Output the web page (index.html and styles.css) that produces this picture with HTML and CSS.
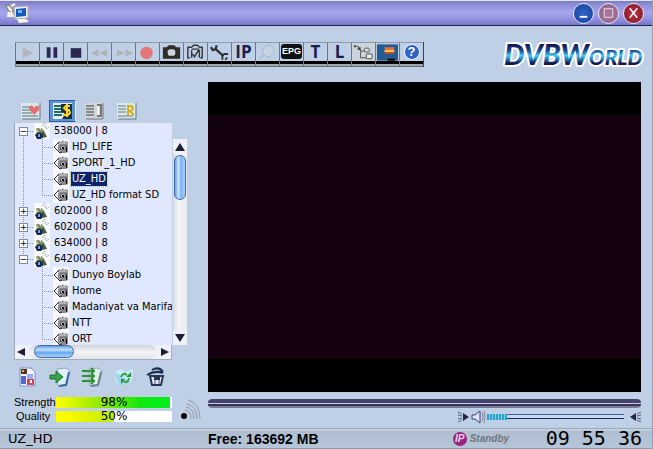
FILE: index.html
```html
<!DOCTYPE html>
<html lang="en">
<head>
<meta charset="utf-8">
<title>DVBWorld</title>
<link rel="stylesheet" href="styles.css">
</head>
<body>
<svg class="defs" aria-hidden="true">
  <defs>
    <symbol id="dish" viewBox="0 0 16 16">
      <path d="M0 0h16v16H0z" fill="#f8faff"/>
      <path d="M2 5l3 0 5 5-2 2-4-2z" fill="#7d8c62"/>
      <path d="M2 5l6 8-2 1-4-4z" fill="#c9cf9a"/>
      <path d="M7 5l3 3 3 6-5 1z" fill="#47614b"/>
      <path d="M7 5l2 1 0 3-2-1z" fill="#8ba86a"/>
      <path d="M1 12l3-3 3 1 2 3-2 3H3z" fill="#16234f"/>
      <path d="M4 11h2v3H4z" fill="#6fa8d4"/>
      <path d="M8 3l2-1M11 5l1-3M12 6l3-2M9 1l3-1" stroke="#b4b4bc" fill="none"/>
    </symbol>
    <symbol id="channel" viewBox="0 0 16 16">
      <path d="M0 0h16v16H0z" fill="#f8faff"/>
      <path d="M5 4l2-2 1 1 2-2 1 2 2-1 2 1v10l-2 1H8L4 10z" fill="#8e8e90"/>
      <path d="M5 6l2-2h7" stroke="#cfcfd2" fill="none"/>
      <path d="M7 6h7v5H7z" fill="#6a6a6e"/>
      <path d="M8 7h4v3H8z" fill="#a9a9ad"/>
      <path d="M9 8h2v2H9zM13 8h1v5h-1z" fill="#111"/>
      <path d="M1 8l4-4v8z" fill="#fff"/>
      <path d="M6 3L1 8l6 6 2-1" stroke="#26262c" fill="none"/>
    </symbol>
    <linearGradient id="chrome" x1="0" y1="0" x2="0" y2="1">
      <stop offset=".25" stop-color="#141650"/>
      <stop offset=".42" stop-color="#1c4c94"/>
      <stop offset=".56" stop-color="#49c9f2"/>
      <stop offset=".64" stop-color="#2a8cc8"/>
      <stop offset=".78" stop-color="#15174c"/>
    </linearGradient>
  </defs>
</svg>

<div class="titlebar">
  <svg class="app-icon" width="24" height="22" viewBox="0 0 24 22" aria-hidden="true">
    <path d="M1 3l4 1 3 4-1 3-4-3z" fill="#f4f2e4" stroke="#7d7868"/>
    <path d="M6 4l4-2M4 10l-1 4h5l-2-4" fill="#eee" stroke="#f6f3dc" stroke-width="2"/>
    <path d="M9 5l14-1v12l-13 1z" fill="#f1f1ec" stroke="#aaa9b5"/>
    <path d="M11 7l10-1v8l-10 1z" fill="#1659bd"/>
    <path d="M13 8h4v3h-4z" fill="#73b6ef"/>
    <path d="M12 17h9l3 3-10 1z" fill="#f7f5df"/>
  </svg>
  <div class="window-buttons">
    <button class="win win-min" aria-label="Minimize"><svg width="20" height="20" viewBox="0 0 20 20"><path d="M6 14h8" stroke="#fff" stroke-width="2"/></svg></button>
    <button class="win win-max" aria-label="Maximize"><svg width="20" height="20" viewBox="0 0 20 20"><path d="M5.500 5.500h9v9h-9z" stroke="#f2dbe6" fill="none"/></svg></button>
    <button class="win win-close" aria-label="Close"><svg width="20" height="20" viewBox="0 0 20 20"><path d="M6 5l8 10M14 5L6 15" stroke="#fff" stroke-width="1.500"/></svg></button>
  </div>
</div>

<header class="header">
  <div class="toolbar" role="toolbar" aria-label="Playback">
    <button aria-label="Play"><svg viewBox="0 0 24 18"><path d="M7 4v11l11-5z" fill="#b4b6ba"/></svg></button>
    <button aria-label="Pause"><svg viewBox="0 0 24 18"><path d="M7 4h4v11H7zM14 4h4v11h-4z" fill="#282a55"/></svg></button>
    <button aria-label="Stop"><svg viewBox="0 0 24 18"><path d="M7 5h11v10H7z" fill="#2b2650"/></svg></button>
    <button aria-label="Rewind"><svg viewBox="0 0 24 18"><path d="M11 6v8l-8-4zM20 6v8l-8-4z" fill="#b0b4ba"/></svg></button>
    <button aria-label="Forward"><svg viewBox="0 0 24 18"><path d="M5 6v8l8-4zM14 6v8l8-4z" fill="#b0b4ba"/></svg></button>
    <button aria-label="Record"><svg viewBox="0 0 24 18"><circle cx="11" cy="10" r="6.500" fill="#e27678"/></svg></button>
    <button aria-label="Snapshot"><svg viewBox="0 0 24 18"><path d="M3 4h4l2-2h6l2 2h4v12H3z" fill="#302d27"/><rect x="8" y="6" width="8" height="7" rx="3" fill="#cdd6df"/></svg></button>
    <button aria-label="Schedule"><svg viewBox="0 0 24 18"><path d="M6 15H4V4h4m8 0h3v11h-2M8 4l2-2h4l2 2M8 6h8M8 7v8M16 7v8M9 11l2 3 4-7" fill="none" stroke="#34383b" stroke-width="1.500"/></svg></button>
    <button aria-label="Settings"><svg viewBox="0 0 24 18"><path d="M3 4l2 3 3-1 1-4M8 6l8 7" fill="none" stroke="#30343a" stroke-width="2.500"/><path d="M15 17v-4l2-2h4M20 15l-2 2" fill="none" stroke="#30343a" stroke-width="2"/></svg></button>
    <button class="letter">IP</button>
    <button aria-label="Search"><svg viewBox="0 0 24 18"><circle cx="13" cy="8" r="6" fill="#c3d4e6" stroke="#a8b7c3"/><path d="M8 12l-4 4" stroke="#b5bdc3" stroke-width="2"/></svg></button>
    <button class="epg"><span>EPG</span></button>
    <button class="letter">T</button>
    <button class="letter">L</button>
    <button class="pressed" aria-label="Channel tree"><svg viewBox="0 0 24 18"><path d="M2 2h2v2H2zM6 4h3v3H6z" fill="#444"/><path d="M4 3h3M9 6v9h6M9 8h5" stroke="#555" fill="none"/><rect x="13" y="5" width="5" height="4" rx="1" fill="#ddd" stroke="#555"/><rect x="15" y="11" width="6" height="5" rx="1" fill="#eee" stroke="#444"/></svg></button>
    <button aria-label="Display"><svg viewBox="0 0 24 18"><path d="M1 1h22v17H1z" fill="#235c91"/><path d="M9 4h10v3H9z" fill="#ed6942"/><path d="M9 7h10v2H9z" fill="#ffd13a"/><path d="M9 9h10v2H9z" fill="#c94a31"/><path d="M12 16h8v2h-8z" fill="#000"/></svg></button>
    <button aria-label="Help" class="help"><span>?</span></button>
  </div>
  <svg class="logo" width="146" height="36" viewBox="0 0 146 36" role="img" aria-label="DVBWorld">
    <text class="logo-text" x="3" y="25"><tspan class="logo-big">DVBW</tspan><tspan class="logo-small">ORLD</tspan></text>
  </svg>
</header>

<main class="main">
  <aside class="sidebar">
    <div class="tabs">
      <button aria-label="Favorites"><svg width="20" height="18" viewBox="0 0 20 18"><path d="M0 1h19v16H0z" fill="#dce7e8"/><path d="M1 5h9M1 8h9M1 11h10M1 14h16" stroke="#4d7683"/><path d="M1 17h18V1" fill="none" stroke="#66727b"/><path d="M13 13L8 7c-1-4 4-5 5-1 2-4 7-2 5 2z" fill="#e66f77"/></svg></button>
      <button class="active" aria-label="Satellites"><svg width="20" height="18" viewBox="0 0 20 18"><path d="M0 1h19v16H0z" fill="#e6f0df"/><path d="M1 4h8M1 7h8M1 10h9M1 13h8" stroke="#216a74" stroke-width="2"/><path d="M8 2h11v15H9l3-5-4-3z" fill="#17303a"/><path d="M17 4h-4l-2 2 2 2h3l1 3-2 2h-5M14 2v13" fill="none" stroke="#ffd426" stroke-width="2"/></svg></button>
      <button aria-label="Information"><svg width="20" height="18" viewBox="0 0 20 18"><path d="M0 1h18v16H0z" fill="#d3d6d7"/><path d="M1 4h8M1 7h8M1 10h8M1 13h8" stroke="#858a8c" stroke-width="2"/><path d="M1 17h17V1" fill="none" stroke="#70777c"/><path d="M12 3h4v11h-4" fill="none" stroke="#777" stroke-width="2"/><path d="M13 4v9" stroke="#f5f5f5" stroke-width="2"/></svg></button>
      <button aria-label="Radio"><svg width="20" height="18" viewBox="0 0 20 18"><path d="M0 1h19v16H0z" fill="#dce7e8"/><path d="M1 4h8M1 7h8M1 10h8M1 14h15" stroke="#5c7e87"/><path d="M1 17h18V1" fill="none" stroke="#66727b"/><path d="M11 13V4h3q4 2 0 5h-3m2 0l4 4" fill="none" stroke="#d6ad13" stroke-width="2"/></svg></button>
    </div>

    <div class="browser">
      <ul class="tree">
        <li class="group first"><div class="row"><button class="box" aria-label="Collapse">−</button><i class="dots"></i><svg class="ico"><use href="#dish"/></svg><span>538000 | 8</span></div>
          <ul class="channels">
            <li class="row"><i class="dots"></i><svg class="ico"><use href="#channel"/></svg><span>HD_LIFE</span></li>
            <li class="row"><i class="dots"></i><svg class="ico"><use href="#channel"/></svg><span>SPORT_1_HD</span></li>
            <li class="row"><i class="dots"></i><svg class="ico"><use href="#channel"/></svg><span class="selected">UZ_HD</span></li>
            <li class="row"><i class="dots"></i><svg class="ico"><use href="#channel"/></svg><span>UZ_HD format SD</span></li>
          </ul>
        </li>
        <li class="group"><div class="row"><button class="box" aria-label="Expand">+</button><i class="dots"></i><svg class="ico"><use href="#dish"/></svg><span>602000 | 8</span></div></li>
        <li class="group"><div class="row"><button class="box" aria-label="Expand">+</button><i class="dots"></i><svg class="ico"><use href="#dish"/></svg><span>602000 | 8</span></div></li>
        <li class="group"><div class="row"><button class="box" aria-label="Expand">+</button><i class="dots"></i><svg class="ico"><use href="#dish"/></svg><span>634000 | 8</span></div></li>
        <li class="group last"><div class="row"><button class="box" aria-label="Collapse">−</button><i class="dots"></i><svg class="ico"><use href="#dish"/></svg><span>642000 | 8</span></div>
          <ul class="channels">
            <li class="row"><i class="dots"></i><svg class="ico"><use href="#channel"/></svg><span>Dunyo Boylab</span></li>
            <li class="row"><i class="dots"></i><svg class="ico"><use href="#channel"/></svg><span>Home</span></li>
            <li class="row"><i class="dots"></i><svg class="ico"><use href="#channel"/></svg><span>Madaniyat va Marifa</span></li>
            <li class="row"><i class="dots"></i><svg class="ico"><use href="#channel"/></svg><span>NTT</span></li>
            <li class="row"><i class="dots"></i><svg class="ico"><use href="#channel"/></svg><span>ORT</span></li>
          </ul>
        </li>
      </ul>
      <div class="vscroll">
        <button aria-label="Scroll up"><svg width="14" height="14" viewBox="0 0 14 14"><path d="M7 3l5 8H2z" fill="#1e1e33"/></svg></button>
        <div class="vtrack"><div class="vthumb"></div></div>
        <button aria-label="Scroll down"><svg width="14" height="14" viewBox="0 0 14 14"><path d="M7 11l5-8H2z" fill="#1e1e33"/></svg></button>
      </div>
      <div class="hscroll">
        <button aria-label="Scroll left"><svg width="14" height="14" viewBox="0 0 14 14"><path d="M2 7l8-4v8z" fill="#1e1e33"/></svg></button>
        <div class="htrack"><div class="hthumb"></div></div>
        <button aria-label="Scroll right"><svg width="14" height="14" viewBox="0 0 14 14"><path d="M12 7L4 3v8z" fill="#1e1e33"/></svg></button>
      </div>
    </div>

    <div class="actions">
      <button aria-label="Channel report"><svg width="22" height="20" viewBox="0 0 22 20"><path d="M3 1h11l4 4v14H3z" fill="#f5f5ff" stroke="#7b8ed0"/><path d="M4 2h6v5H4z" fill="#5a3422"/><path d="M5 3h2v2H5z" fill="#e5b33c"/><path d="M4 9h5v8H4z" fill="#5368d2"/><path d="M10 7h6v5h-6z" fill="#9aaef0"/><path d="M10 12h7v6h-7z" fill="#db4154"/><path d="M13 13h2v3h-2z" fill="#fff"/></svg></button>
      <button aria-label="Import"><svg width="22" height="20" viewBox="0 0 22 20"><path d="M8 2l9-1 4 3-3 13-9 2z" fill="#dff0fa" stroke="#89a9bd"/><path d="M20 5l-3 13-7 1" fill="none" stroke="#3c6ba0" stroke-width="2"/><path d="M1 8h6V4l7 6-7 6v-4H1z" fill="#36a544" stroke="#237030"/></svg></button>
      <button aria-label="Import all"><svg width="22" height="20" viewBox="0 0 22 20"><path d="M8 2l9-1 4 3-3 13-9 2z" fill="#dff0e4" stroke="#89a9bd"/><path d="M20 5l-3 13-7 1" fill="none" stroke="#6a8590" stroke-width="2"/><path d="M1 4h11M1 9h11M1 14h11M10 1l3 3-3 3M10 6l3 3-3 3M10 11l3 3-3 3" fill="none" stroke="#2f9239" stroke-width="2"/></svg></button>
      <button aria-label="Refresh"><svg width="22" height="20" viewBox="0 0 22 20"><path d="M1 5l7-3 4 3 8-3-2 14-12 3-3-4z" fill="#c9edf7"/><path d="M1 5l9 5 8 6-12 3z" fill="#a0d4e9"/><path d="M8 10q2-5 6-2M16 11q-1 6-6 3" fill="none" stroke="#36a046" stroke-width="2"/><path d="M13 10h5V5zM12 12H8v5z" fill="#2b8e3c"/></svg></button>
      <button aria-label="Delete"><svg width="22" height="20" viewBox="0 0 22 20"><path d="M5 9h13l-2 9H7z" fill="#e4eaf2" stroke="#263454" stroke-width="2"/><path d="M2 8q8-5 16-2M7 3q7-4 11 2" fill="none" stroke="#1e2b4b" stroke-width="2"/><path d="M10 10v7M14 10v7" stroke="#43557c"/><path d="M9 10h6v3H9z" fill="#263454"/></svg></button>
    </div>

    <div class="signal">
      <div class="meters">
        <span id="str">Strength</span><div class="meter" role="meter" aria-labelledby="str" aria-valuenow="98"><div class="fill strong" style="width:98%"></div><span class="value">98%</span></div>
        <span id="qua" class="quality">Quality</span><div class="meter" role="meter" aria-labelledby="qua" aria-valuenow="50"><div class="fill" style="width:50%"></div><span class="value">50%</span></div>
      </div>
      <svg width="22" height="24" viewBox="0 0 22 24" aria-hidden="true"><circle cx="4" cy="18" r="3" fill="#080808"/><g fill="none" stroke="#939ba5"><path d="M5 12q6 1 6 9"/><path d="M6 9q8 1 8 12"/><path d="M7 6q10 2 10 15"/><path d="M8 2q12 3 12 19"/></g></svg>
    </div>
  </aside>

  <section class="player">
    <div class="video"><div class="frame"></div></div>
    <input class="seek" type="range" min="0" max="100" value="0" aria-label="Position">
    <div class="volume">
      <button aria-label="Volume down"><svg width="12" height="12" viewBox="0 0 12 12"><path d="M5 2l6 4-6 4z" fill="#24243c"/><path d="M0 1l4 2M0 4l4 1M0 8l4-1M0 11l4-2" stroke="#555b70"/></svg></button>
      <button aria-label="Mute"><svg width="15" height="14" viewBox="0 0 15 14"><path d="M1 5h3l5-4v12L4 9H1z" fill="#dde6f6" stroke="#3a3a80"/><path d="M11 3q2 4 0 8M13 1q2 6 0 12" fill="none" stroke="#83868e"/></svg></button>
      <input class="level" type="range" min="0" max="100" value="15" aria-label="Volume">
      <button aria-label="Volume up"><svg width="12" height="12" viewBox="0 0 12 12"><path d="M7 2L1 6l6 4z" fill="#24243c"/><path d="M12 1L8 3M12 4L8 5M12 8L8 7M12 11L8 9" stroke="#555b70"/></svg></button>
    </div>
  </section>
</main>

<footer class="status">
  <span class="channel-name">UZ_HD</span>
  <span class="free">Free: 163692 MB</span>
  <span class="standby"><span class="ip">IP</span>Standby</span>
  <time class="clock">09 55 36</time>
</footer>
</body>
</html>
```

FILE: styles.css
```css
* { box-sizing: border-box; }

body {
  margin: 0;
  min-height: 100vh;
  display: flex;
  flex-direction: column;
  background: #bfd0e6;
  border-right: 1px solid #8f9fb8;
  color: #000;
  font-family: "Liberation Sans", sans-serif;
  font-size: 11px;
}

button {
  margin: 0;
  padding: 0;
  border: 0;
  background: none;
  color: inherit;
  font: inherit;
  display: flex;
  align-items: center;
  justify-content: center;
}

ul { list-style: none; margin: 0; padding: 0; }
svg { display: block; }
.defs { position: absolute; width: 0; height: 0; }

/* Title bar */
.titlebar {
  height: 26px;
  display: flex;
  justify-content: space-between;
  align-items: center;
  padding: 0 8px 0 5px;
  border-top: 1px solid #dfe5f7;
  border-bottom: 1px solid #20244f;
  background: linear-gradient(#7c7cc2, #9393dc 20%, #a6a6ec 50%, #8c8cda 80%, #7676c4);
}
.window-buttons { display: flex; gap: 4px; }
.win {
  width: 21px;
  height: 21px;
  border: 1px solid #e9e6f6;
  border-radius: 50%;
}
.win-min { background: radial-gradient(#2f64c8, #173f9c); }
.win-max { background: radial-gradient(#a9799b, #8d6088); }
.win-close { background: radial-gradient(#c03442, #7c1227); }

/* Toolbar and logo */
.header {
  height: 56px;
  display: flex;
  justify-content: space-between;
  align-items: flex-start;
  padding: 14px 5px 0 15px;
}
.toolbar {
  display: flex;
  height: 25px;
  margin-top: 2px;
  border-right: 1px solid #39414c;
}
.toolbar button {
  width: 24px;
  height: 25px;
  align-items: flex-start;
  border-top: 1px solid #8e9bab;
  border-left: 1px solid #6c7787;
  border-bottom: 1px solid #5f6877;
  background: linear-gradient(#bfd0e6 18px, #000 18px, #000 21px, #a3a9ae 21px);
}
.toolbar svg { width: 23px; height: 18px; }
.toolbar .letter {
  font: bold 17px/18px "Open Sans", sans-serif;
  color: #17204c;
}
.toolbar .pressed { background: linear-gradient(#ccd5de 18px, #000 18px, #000 21px, #a3a9ae 21px); }
.epg span {
  width: 21px;
  height: 15px;
  margin-top: 1px;
  border-radius: 3px;
  background: #111;
  color: #fff;
  font: bold 9px/15px "Liberation Sans", sans-serif;
}
.help span {
  width: 16px;
  height: 16px;
  margin-top: 1px;
  border: 1px solid #f4f7ff;
  border-radius: 50%;
  background: #2e62c9;
  color: #fff;
  font: bold 13px/14px "Liberation Sans", sans-serif;
}
.logo { overflow: visible; }
.logo-text {
  font-family: Lato, sans-serif;
  font-weight: 900;
  font-style: italic;
  fill: url(#chrome);
  stroke: #fff;
  stroke-width: 4px;
  stroke-linejoin: round;
  paint-order: stroke;
}
.logo-big { font-size: 29px; }
.logo-small { font-size: 21px; }

/* Main area */
.main {
  flex: 1;
  display: grid;
  grid-template-columns: 186px 1fr;
  gap: 8px;
  padding: 0 11px 5px 14px;
}
.sidebar { display: flex; flex-direction: column; padding-top: 18px; }
.tabs { display: flex; gap: 5px; padding-left: 3px; }
.tabs button {
  width: 27px;
  height: 22px;
}
.tabs .active {
  background: #5e92dc;
  border: 1px solid #315b9c;
  border-right-color: #e9f2ff;
}

.browser {
  display: grid;
  grid-template-columns: 158px 15px;
  grid-template-rows: 1fr 15px;
}
.tree {
  height: 223px;
  overflow: hidden;
  background: #dfe8ff;
  border-left: 1px solid #9aa5b8;
  border-top: 1px solid #c4cede;
  font: 11px/16px "DejaVu Sans Condensed", "Open Sans", sans-serif;
  white-space: nowrap;
  padding-left: 4px;
}
.row { display: flex; align-items: center; height: 16px; }
.row span { padding: 0 1px; margin-left: 3px; line-height: 14px; }
.group { background: repeating-linear-gradient(#8992a5 0 1px, transparent 1px 2px) 4px 0 / 1px 100% no-repeat; }
.group.first { background-position: 4px 8px; }
.group.last { background-size: 1px 8px; }
.ico { width: 16px; height: 16px; flex: none; }
.box {
  width: 9px;
  height: 9px;
  border: 1px solid #7f8ea8;
  background: #fff;
  font: 9px/7px "DejaVu Sans", sans-serif;
}
.dots {
  flex: none;
  width: 6px;
  height: 1px;
  background: repeating-linear-gradient(90deg, #8992a5 0 1px, transparent 1px 2px);
}
.channels {
  margin-left: 23px;
  background: repeating-linear-gradient(#8992a5 0 1px, transparent 1px 2px) 0 0 / 1px calc(100% - 8px) no-repeat;
}
.channels .dots { width: 11px; }
.channels span { margin-left: 2px; }
.row .selected { background: #0c246a; color: #fff; outline: 1px dotted #c9c27a; }

.vscroll {
  display: flex;
  flex-direction: column;
  padding-top: 17px;
  padding-left: 1px;
}
.vscroll button, .hscroll button { width: 14px; height: 15px; background: #eef1f7; }
.vtrack { flex: 1; background: linear-gradient(90deg, #d5d9e1, #f3f4f6 40%, #e8eaef); }
.vthumb {
  height: 45px;
  margin: 1px;
  border: 1px solid #3e6aa9;
  border-radius: 6px;
  background: linear-gradient(90deg, #6d9fdc, #cae4ff 35%, #78b3f2 60%, #a7d5ff);
}
.hscroll { display: flex; border: solid #a4acba; border-width: 0 1px 1px; background: #eef1f7; }
.hscroll button { height: 14px; }
.htrack { flex: 1; border-radius: 7px; background: linear-gradient(#cfd3dc, #f3f4f6 50%, #e2e5ea); }
.hthumb {
  width: 40px;
  height: 13px;
  margin-left: 5px;
  border: 1px solid #3e6aa9;
  border-radius: 7px;
  background: linear-gradient(#6d9fdc, #c3e0ff 35%, #69a8ee 60%, #a7d5ff);
}

.actions { display: flex; gap: 10px; padding: 7px 0 0 3px; }
.actions button { width: 22px; height: 20px; }
.signal { display: flex; align-items: flex-end; gap: 8px; margin-top: auto; margin-right: -2px; padding-bottom: 1px; }
.meters {
  flex: 1;
  display: grid;
  grid-template-columns: 42px 1fr;
  row-gap: 3px;
  align-items: center;
  line-height: 11px;
}
.quality { padding-left: 2px; }
.meter { display: grid; height: 11px; background: #fff; }
.meter > * { grid-area: 1 / 1; }
.value { text-align: center; font: 12px/11px "DejaVu Sans", sans-serif; }
.fill { background: linear-gradient(90deg, #ffff00, #f4f800 30%, #b8ee00); }
.strong { background: linear-gradient(90deg, #ffff00, #8ce800 40%, #10e810 75%, #00f020); }

/* Player */
.player { display: flex; flex-direction: column; min-width: 0; }
.video { flex: 1; display: flex; padding: 33px 0; background: #000; }
.frame { flex: 1; background: #130110; }

input { -webkit-appearance: none; appearance: none; margin: 0; min-width: 0; }
input::-webkit-slider-thumb { -webkit-appearance: none; width: 1px; height: 1px; background: transparent; }
.seek {
  height: 9px;
  margin: 7px 0 3px;
  border-radius: 4px;
  background: linear-gradient(#45456b 4px, #c7cde2 4px, #c7cde2 5px, #34345d 5px, #34345d 7px, #777b98 7px);
}
.volume { display: flex; align-items: center; height: 12px; margin-left: 250px; gap: 1px; }
.level {
  flex: 1;
  height: 6px;
  margin-right: 4px;
  background:
    repeating-linear-gradient(90deg, #2e9fc8 0 2px, #7fd3ea 2px 3px) 0 0 / 20px 6px no-repeat,
    linear-gradient(#4162a0 1px, #c9d8ee 1px, #c9d8ee 4px, #1b2c5c 4px, #1b2c5c 5px, transparent 5px);
}

/* Status bar */
.status {
  height: 21px;
  display: grid;
  grid-template-columns: 200px 1fr 93px max-content;
  align-items: center;
  padding: 0 10px 0 8px;
  border-top: 1px solid #9aaabd;
  border-bottom: 1px solid #8b9bb0;
  background: linear-gradient(#c5d3e2 1px, #afbfd1 2px, #b6c6d8);
  white-space: nowrap;
}
.channel-name { font: 13px/18px "DejaVu Sans", sans-serif; }
.free { font: bold 14px/18px "Liberation Sans", sans-serif; }
.standby {
  display: flex;
  align-items: center;
  gap: 3px;
  color: #70757f;
  font: italic bold 10px/14px "Liberation Sans", sans-serif;
}
.ip {
  width: 14px;
  height: 14px;
  border-radius: 50%;
  background: #95257f;
  color: #e9d3ea;
  text-align: center;
}
.clock { font: 20px/19px "DejaVu Sans Mono", monospace; }
```
